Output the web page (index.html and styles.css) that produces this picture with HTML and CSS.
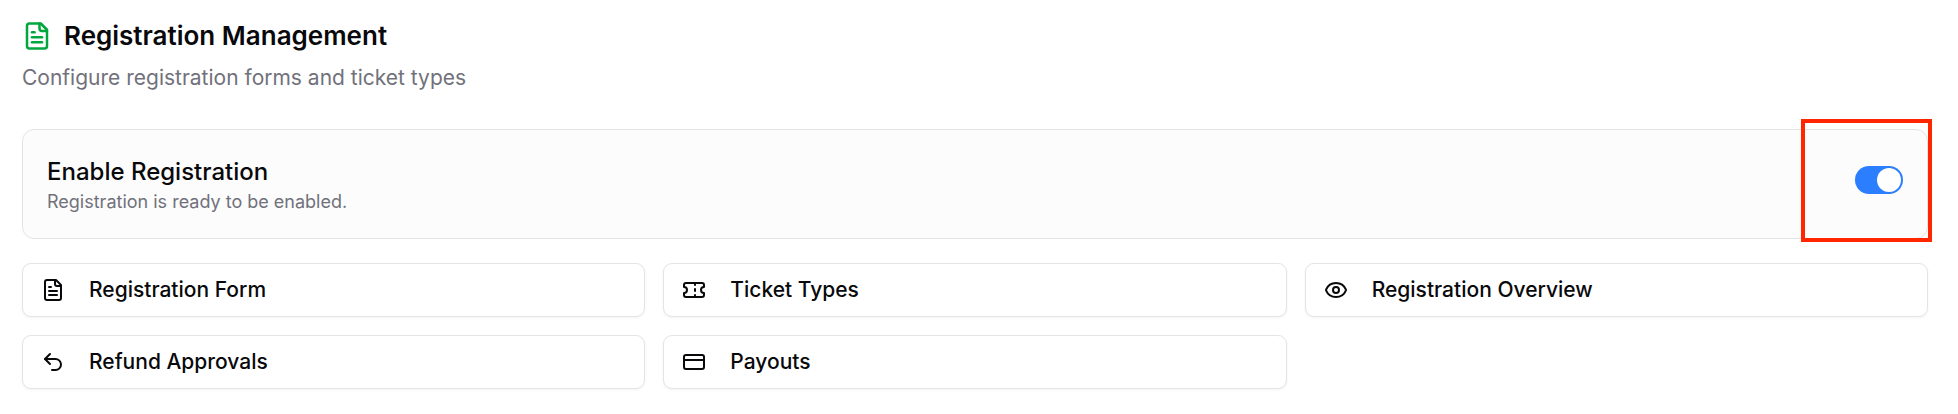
FILE: index.html
```html
<!DOCTYPE html>
<html lang="en">
<head>
<meta charset="utf-8">
<title>Registration Management</title>
<link rel="stylesheet" href="styles.css">
</head>
<body>
<main class="page">
  <header class="header">
    <h1 class="title">
      <svg class="icon icon-title" viewBox="0 0 24 24" aria-hidden="true"><path d="M15 2H6a2 2 0 0 0-2 2v16a2 2 0 0 0 2 2h12a2 2 0 0 0 2-2V7Z"/><path d="M14 2v4a2 2 0 0 0 2 2h4"/><path d="M10 9H8"/><path d="M16 13H8"/><path d="M16 17H8"/></svg>
      Registration Management
    </h1>
    <p class="subtitle">Configure registration forms and ticket types</p>
  </header>

  <section class="panel">
    <div class="panel-text">
      <label class="panel-label" for="enable">Enable Registration</label>
      <p class="panel-note" id="enable-note">Registration is ready to be enabled.</p>
    </div>
    <input class="switch" type="checkbox" role="switch" id="enable" aria-describedby="enable-note" checked>
    <span class="highlight"></span>
  </section>

  <nav class="links">
    <button class="link" type="button">
      <svg class="icon" viewBox="0 0 24 24" aria-hidden="true"><path d="M15 2H6a2 2 0 0 0-2 2v16a2 2 0 0 0 2 2h12a2 2 0 0 0 2-2V7Z"/><path d="M14 2v4a2 2 0 0 0 2 2h4"/><path d="M10 9H8"/><path d="M16 13H8"/><path d="M16 17H8"/></svg>
      Registration Form
    </button>
    <button class="link" type="button">
      <svg class="icon" viewBox="0 0 24 24" aria-hidden="true"><path d="M2 9a3 3 0 0 1 0 6v2a2 2 0 0 0 2 2h16a2 2 0 0 0 2-2v-2a3 3 0 0 1 0-6V7a2 2 0 0 0-2-2H4a2 2 0 0 0-2 2Z"/><path d="M13 5v2"/><path d="M13 17v2"/><path d="M13 11v2"/></svg>
      Ticket Types
    </button>
    <button class="link" type="button">
      <svg class="icon" viewBox="0 0 24 24" aria-hidden="true"><path d="M2.062 12.348a1 1 0 0 1 0-.696 10.75 10.75 0 0 1 19.876 0 1 1 0 0 1 0 .696 10.75 10.75 0 0 1-19.876 0"/><circle cx="12" cy="12" r="3"/></svg>
      Registration Overview
    </button>
    <button class="link" type="button">
      <svg class="icon" viewBox="0 0 24 24" aria-hidden="true"><path d="M9 14 4 9l5-5"/><path d="M4 9h10.500a5.500 5.500 0 0 1 0 11H11"/></svg>
      Refund Approvals
    </button>
    <button class="link" type="button">
      <svg class="icon" viewBox="0 0 24 24" aria-hidden="true"><rect width="20" height="14" x="2" y="5" rx="2"/><path d="M2 10h20"/></svg>
      Payouts
    </button>
  </nav>
</main>
</body>
</html>
```
FILE: styles.css
```css
* {
  box-sizing: border-box;
}

body {
  margin: 0;
  background: #fff;
  color: #09090b;
  font-family: Inter, "Liberation Sans", sans-serif;
}

.page {
  padding: 18px 30px 24px 22px;
}

.header {
  margin-bottom: 36px;
}

.title {
  display: flex;
  align-items: center;
  gap: 12px;
  margin: 0;
  font-size: 26px;
  line-height: 36px;
  font-weight: 600;
}

.icon {
  flex: none;
  width: 24px;
  height: 24px;
  fill: none;
  stroke: currentColor;
  stroke-width: 2;
  stroke-linecap: round;
  stroke-linejoin: round;
}

.icon-title {
  width: 30px;
  height: 30px;
  color: #00a63e;
}

.subtitle {
  margin: 9px 0 0;
  color: #71717b;
  font-size: 21px;
  line-height: 30px;
}

.panel {
  position: relative;
  display: flex;
  align-items: flex-start;
  justify-content: space-between;
  margin-bottom: 24px;
  padding: 24px;
  border: 1px solid #e4e4e7;
  border-radius: 12px;
  background: #fcfcfc;
}

.panel-label {
  display: block;
  font-size: 24px;
  line-height: 36px;
  font-weight: 500;
}

.panel-note {
  margin: 0;
  color: #71717b;
  font-size: 18px;
  line-height: 24px;
}

.switch {
  appearance: none;
  display: flex;
  align-items: center;
  width: 48px;
  height: 28px;
  margin: 12px 0 0;
  padding: 2px;
  border-radius: 14px;
  background: #d4d4d8;
  cursor: pointer;
}

.switch::before {
  content: "";
  width: 24px;
  height: 24px;
  border-radius: 50%;
  background: #fff;
}

.switch:checked {
  justify-content: flex-end;
  background: #2b7fff;
}

.highlight {
  position: absolute;
  top: -11px;
  right: -5px;
  bottom: -4px;
  width: 131px;
  border: 4px solid #ff2600;
  pointer-events: none;
}

.links {
  display: grid;
  grid-template-columns: repeat(3, 1fr);
  gap: 18px;
}

.link {
  display: flex;
  align-items: center;
  gap: 24px;
  min-height: 54px;
  padding: 8px 18px;
  border: 1px solid #e4e4e7;
  border-radius: 9px;
  background: #fff;
  box-shadow: 0 1px 3px rgb(0 0 0 / 5%);
  color: inherit;
  font: inherit;
  font-size: 21px;
  line-height: 30px;
  font-weight: 500;
  text-align: left;
  cursor: pointer;
}
```
